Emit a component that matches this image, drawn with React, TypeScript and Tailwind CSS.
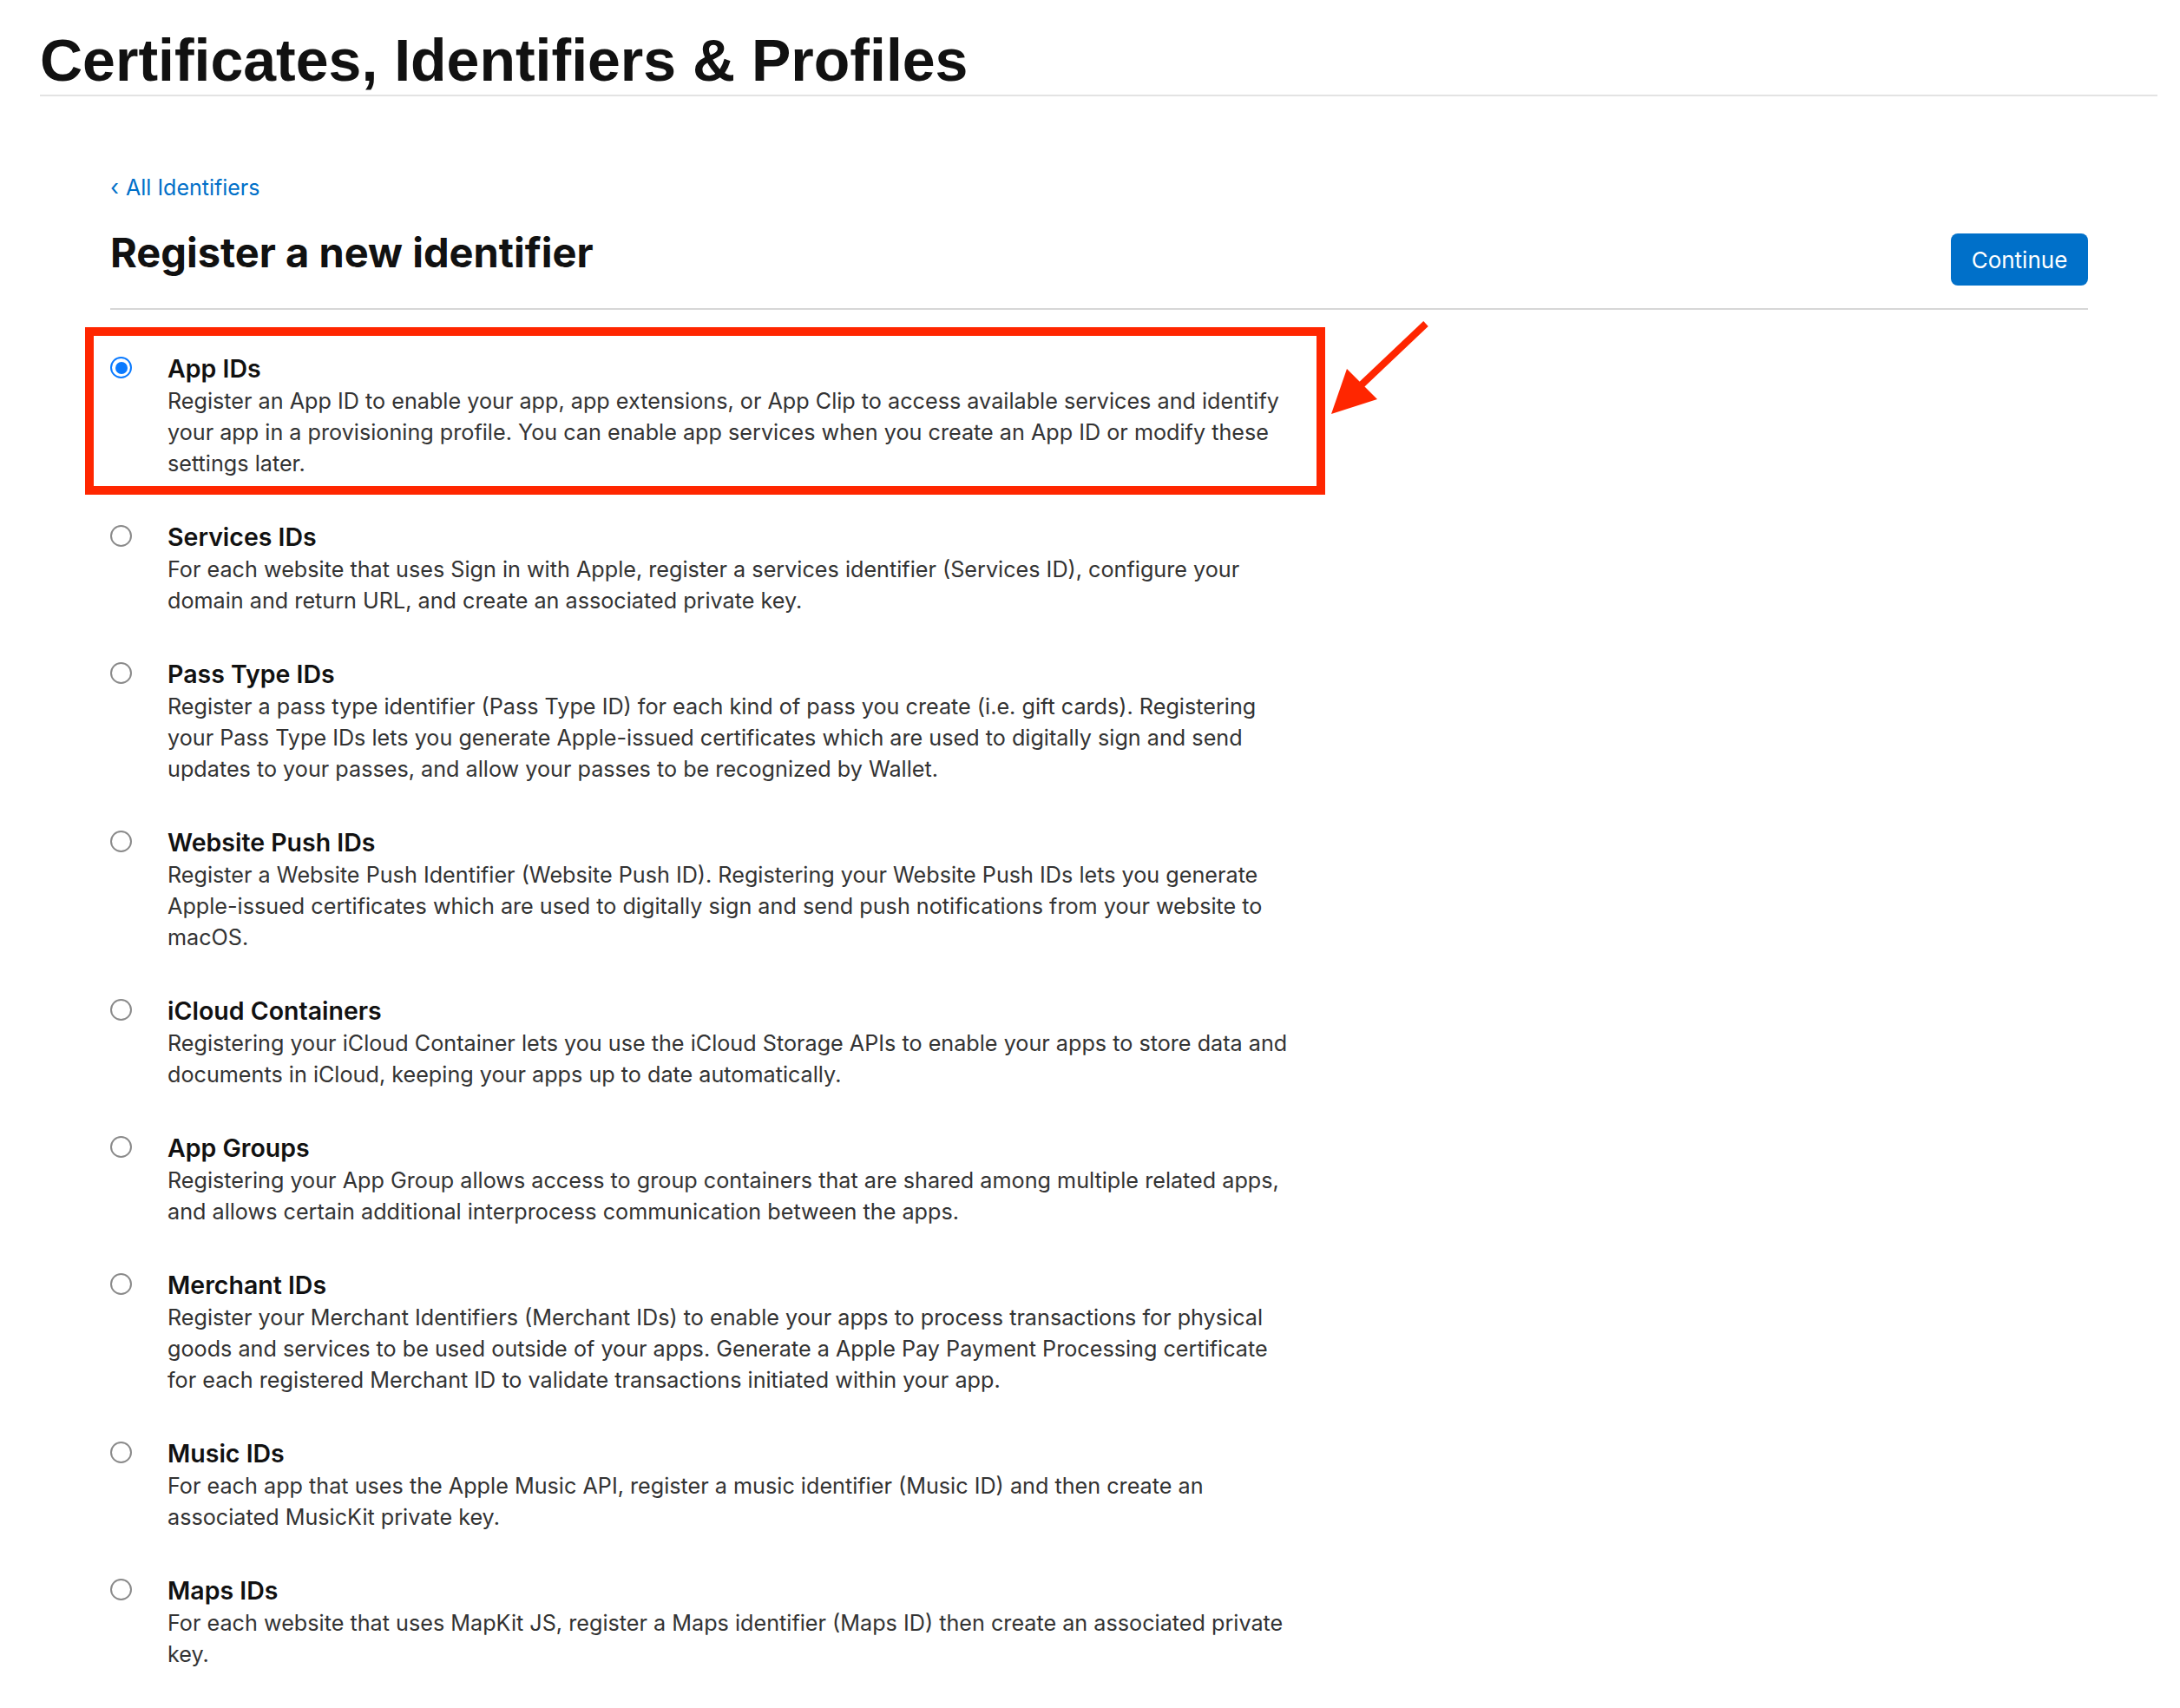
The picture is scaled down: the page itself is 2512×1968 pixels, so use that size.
import React from 'react'

type Identifier = {
  title: string
  lines: string[]
  selected?: boolean
}

const identifiers: Identifier[] = [
  {
    title: 'App IDs',
    selected: true,
    lines: [
      'Register an App ID to enable your app, app extensions, or App Clip to access available services and identify',
      'your app in a provisioning profile. You can enable app services when you create an App ID or modify these',
      'settings later.',
    ],
  },
  {
    title: 'Services IDs',
    lines: [
      'For each website that uses Sign in with Apple, register a services identifier (Services ID), configure your',
      'domain and return URL, and create an associated private key.',
    ],
  },
  {
    title: 'Pass Type IDs',
    lines: [
      'Register a pass type identifier (Pass Type ID) for each kind of pass you create (i.e. gift cards). Registering',
      'your Pass Type IDs lets you generate Apple-issued certificates which are used to digitally sign and send',
      'updates to your passes, and allow your passes to be recognized by Wallet.',
    ],
  },
  {
    title: 'Website Push IDs',
    lines: [
      'Register a Website Push Identifier (Website Push ID). Registering your Website Push IDs lets you generate',
      'Apple-issued certificates which are used to digitally sign and send push notifications from your website to',
      'macOS.',
    ],
  },
  {
    title: 'iCloud Containers',
    lines: [
      'Registering your iCloud Container lets you use the iCloud Storage APIs to enable your apps to store data and',
      'documents in iCloud, keeping your apps up to date automatically.',
    ],
  },
  {
    title: 'App Groups',
    lines: [
      'Registering your App Group allows access to group containers that are shared among multiple related apps,',
      'and allows certain additional interprocess communication between the apps.',
    ],
  },
  {
    title: 'Merchant IDs',
    lines: [
      'Register your Merchant Identifiers (Merchant IDs) to enable your apps to process transactions for physical',
      'goods and services to be used outside of your apps. Generate a Apple Pay Payment Processing certificate',
      'for each registered Merchant ID to validate transactions initiated within your app.',
    ],
  },
  {
    title: 'Music IDs',
    lines: [
      'For each app that uses the Apple Music API, register a music identifier (Music ID) and then create an',
      'associated MusicKit private key.',
    ],
  },
  {
    title: 'Maps IDs',
    lines: [
      'For each website that uses MapKit JS, register a Maps identifier (Maps ID) then create an associated private',
      'key.',
    ],
  },
]

const Radio: React.FC<{ checked?: boolean }> = ({ checked }) =>
  checked ? (
    <div className="mt-[5px] flex h-[25px] w-[25px] shrink-0 items-center justify-center rounded-full border-[2.5px] border-[#0a7aff] bg-white">
      <div className="h-[14px] w-[14px] rounded-full bg-[#0a7aff]"></div>
    </div>
  ) : (
    <div className="mt-[5px] h-[25px] w-[25px] shrink-0 rounded-full border-2 border-[#8a8a8a] bg-white"></div>
  )

export default function App() {
  return (
    <div
      className="relative min-h-screen bg-white text-[#1d1d1f]"
      style={{ fontFamily: 'Inter, "Noto Sans", sans-serif' }}
    >
      {/* Page header */}
      <div className="ml-[46px] mr-[26px] border-b-2 border-[#e3e3e3] pb-[6px] pt-[35px]">
        <h1
          className="text-[68px] font-bold leading-none text-[#111111]"
          style={{ fontFamily: '"Liberation Sans", Arial, sans-serif' }}
        >
          Certificates, Identifiers &amp; Profiles
        </h1>
      </div>

      <div className="ml-[127px] mr-[106px]">
        <a className="mt-[87px] flex items-center gap-[8px] text-[25px] leading-[36px] text-[#0070c9]">
          <span className="text-[26px]">‹</span>
          <span>All Identifiers</span>
        </a>

        <div className="mt-[29px] flex items-start justify-between border-b-2 border-[#d6d6d6] pb-[26px]">
          <h2 className="text-[47px] font-bold leading-[56px] text-[#111111]">
            Register a new identifier
          </h2>
          <button className="mt-[6px] h-[60px] w-[158px] rounded-[8px] bg-[#0070c9] text-[26px] text-white">
            Continue
          </button>
        </div>

        {/* Identifier types */}
        <div className="pt-[49px]">
          {identifiers.map((item, i) => (
            <div key={item.title} className="relative flex pb-[48px]">
              {i === 0 && (
                <div className="absolute left-[-29px] top-[-29px] h-[193px] w-[1429px] border-[10px] border-[#ff2600]"></div>
              )}
              <Radio checked={item.selected} />
              <div className="ml-[41px]">
                <div className="text-[28.5px] font-semibold leading-[38px] text-[#111111]">{item.title}</div>
                <div className="text-[25.2px] leading-[36px] text-[#333333]">
                  {item.lines.map((line) => (
                    <div key={line} className="whitespace-nowrap">
                      {line}
                    </div>
                  ))}
                </div>
              </div>
            </div>
          ))}
        </div>
      </div>

      {/* Annotation arrow */}
      <svg className="absolute left-[1525px] top-[365px]" width="130" height="120" viewBox="0 0 130 120">
        <line x1="118" y1="8" x2="42" y2="80" stroke="#ff2600" strokeWidth="8" />
        <polygon points="9,112 27,60 62,95" fill="#ff2600" />
      </svg>
    </div>
  )
}
